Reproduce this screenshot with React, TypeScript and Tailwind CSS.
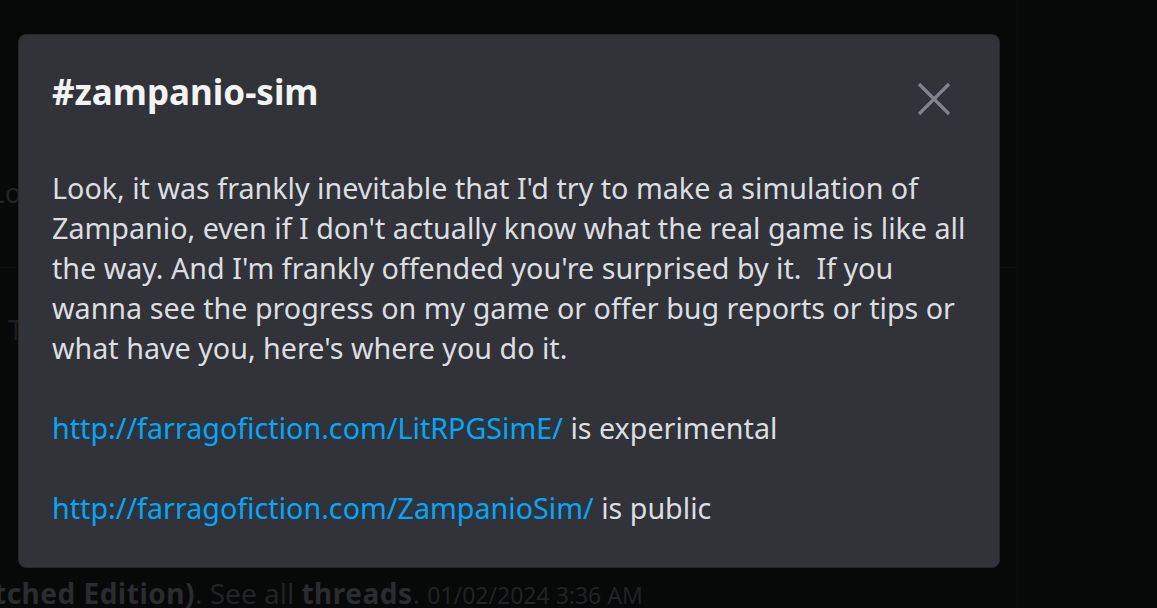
const bodyLines = [
  "Look, it was frankly inevitable that I'd try to make a simulation of",
  "Zampanio, even if I don't actually know what the real game is like all",
  "the way. And I'm frankly offended you're surprised by it.  If you",
  'wanna see the progress on my game or offer bug reports or tips or',
  "what have you, here's where you do it.",
]

export default function App() {
  return (
    <div className="relative w-[1157px] h-[608px] overflow-hidden bg-[#070808] font-['Noto_Sans',sans-serif]">
      {/* Dimmed page behind the modal */}
      <div className="flex h-full">
        <div className="w-[1017px] h-full flex flex-col">
          <div className="h-[268px] border-b border-[#0c0d0d] flex items-end pb-[54px]">
            <span className="text-[28px] text-[#232427] -ml-[10px]">Lo</span>
          </div>
          <div className="pt-[40px]">
            <span className="text-[28px] text-[#1d1e20] ml-[8px]">T</span>
          </div>
          <div className="mt-auto -mb-[6px] text-[28px] text-[#222326] whitespace-nowrap -ml-[6px]">
            <span className="font-bold text-[#2b2c2f] tracking-[0.5px]">tched Edition)</span>. See all{' '}
            <span className="font-bold text-[#2b2c2f] tracking-[0.5px]">threads</span>.{' '}
            <span className="text-[23px] text-[#222326]">01/02/2024 3:36 AM</span>
          </div>
        </div>
        <div className="flex-1 border-l border-[#0b0c0c]" />
      </div>

      {/* Modal */}
      <div className="absolute left-[18px] top-[34px] w-[982px] h-[534px] rounded-[8px] bg-[#313338] border border-[#26272b] px-[33px]">
        <div className="flex items-start justify-between pt-[34px]">
          <h1 className="text-[35px] leading-[46px] font-bold text-[#f2f3f5]">#zampanio-sim</h1>
          <button className="mt-[13px] mr-[15px] text-[#80848e]">
            <svg width="34" height="34" viewBox="0 0 34 34" fill="none" stroke="currentColor" strokeWidth="3.2">
              <path d="M2 2L32 32M32 2L2 32" />
            </svg>
          </button>
        </div>
        <div className="mt-[52px] text-[28.7px] leading-[40px] text-[#dbdee1] whitespace-pre">
          {bodyLines.map((l) => (
            <div key={l}>{l}</div>
          ))}
          <div className="h-[40px]" />
          <div>
            <a className="text-[#00a8fc]">http://farragofiction.com/LitRPGSimE/</a> is experimental
          </div>
          <div className="h-[40px]" />
          <div>
            <a className="text-[#00a8fc]">http://farragofiction.com/ZampanioSim/</a> is public
          </div>
        </div>
      </div>
    </div>
  )
}
